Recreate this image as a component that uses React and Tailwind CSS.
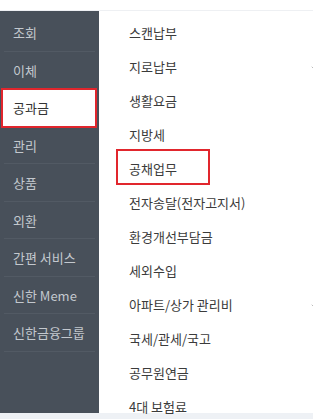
import { ChevronDown } from 'lucide-react';

const sideMenu = ['조회', '이체', '공과금', '관리', '상품', '외환', '간편 서비스', '신한 Meme', '신한금융그룹'];
const subMenu = [
  { label: '스캔납부' },
  { label: '지로납부', more: true },
  { label: '생활요금' },
  { label: '지방세' },
  { label: '공채업무' },
  { label: '전자송달(전자고지서)' },
  { label: '환경개선부담금' },
  { label: '세외수입' },
  { label: '아파트/상가 관리비', more: true },
  { label: '국세/관세/국고' },
  { label: '공무원연금' },
  { label: '4대 보험료' },
];

export default function App() {
  return (
    <div className="w-[313px] h-[419px] flex flex-col overflow-hidden bg-white font-['Noto_Sans_CJK_KR','Noto_Sans',sans-serif] text-[13px]">
      <div className="h-[11px] shrink-0 border-b border-[#eef0f3]" />

      <div className="flex flex-1 min-h-0">
        {/* 왼쪽 메뉴 */}
        <div className="w-[99px] shrink-0 bg-[#48505a] pt-[3px]">
          {sideMenu.map((item, i) => {
            const active = i === 2;
            return (
              <div key={item} className="relative h-[37.5px] flex items-center">
                {active ? (
                  <div className="absolute left-px right-[2px] -top-px -bottom-px bg-white border-2 border-[#e1262d]" />
                ) : (
                  <div className="absolute left-[4px] right-[4px] bottom-0 h-px bg-[#525a64]" />
                )}
                <span className={`relative pl-[13px] ${active ? 'text-[#333]' : 'text-[#c3c8ce]'}`}>{item}</span>
              </div>
            );
          })}
        </div>

        {/* 하위 메뉴 */}
        <div className="flex-1 pt-[5px] pl-[30px]">
          {subMenu.map((item, i) => (
            <div key={item.label} className="relative h-[34px] flex items-center text-[#3b3b3b]">
              {i === 4 && (
                <div className="absolute left-[-13px] w-[94px] top-[-3px] h-[36px] border-2 border-[#e1262d]" />
              )}
              <span className="relative">{item.label}</span>
              {item.more && (
                <ChevronDown size={8} strokeWidth={2} className="absolute right-[-5px] top-[14px] text-[#999]" />
              )}
            </div>
          ))}
        </div>
      </div>

      <div className="h-[6px] shrink-0 bg-[#eef1f5]" />
    </div>
  );
}
